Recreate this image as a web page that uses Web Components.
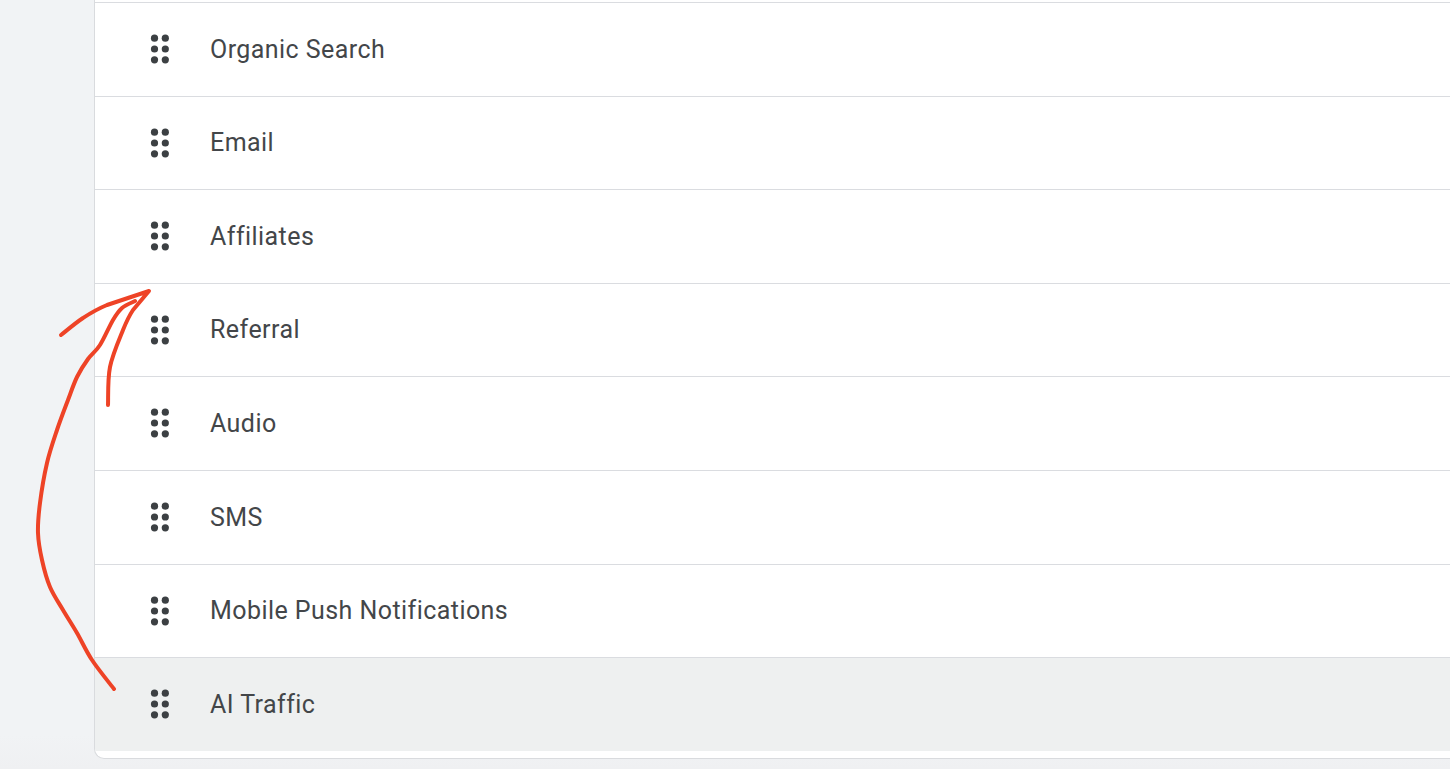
<!DOCTYPE html>
<html>
<head>
<meta charset="utf-8">
<title>Channel groups</title>
<style>
    html, body { margin: 0; height: 100%; overflow: hidden; }
    body {
        background: #f1f3f5;
        font-family: Roboto, "Liberation Sans", sans-serif;
        color: #434649;
    }
</style>
</head>
<body>
<channel-page>
    <channel-list>
        <channel-row>Organic Search</channel-row>
        <channel-row>Email</channel-row>
        <channel-row>Affiliates</channel-row>
        <channel-row>Referral</channel-row>
        <channel-row>Audio</channel-row>
        <channel-row>SMS</channel-row>
        <channel-row>Mobile Push Notifications</channel-row>
        <channel-row selected>AI Traffic</channel-row>
    </channel-list>
    <scribble-arrow></scribble-arrow>
</channel-page>

<script>
class ChannelPage extends HTMLElement {
    constructor() {
        super();
        const shadow = this.attachShadow({ mode: "open" });
        shadow.innerHTML = `
            <style>
                :host {
                    display: block;
                    position: relative;
                    height: 769px;
                    padding-left: 94px;
                    box-sizing: border-box;
                    background: linear-gradient(#f1f3f5 735px, #eff0f2 769px);
                }
            </style>
            <slot></slot>
        `;
    }
}

class ChannelList extends HTMLElement {
    constructor() {
        super();
        const shadow = this.attachShadow({ mode: "open" });
        shadow.innerHTML = `
            <style>
                :host {
                    display: block;
                    background: #fff;
                    box-sizing: border-box;
                    padding: 2px 0 7px;
                    border-left: 1px solid #d9dbde;
                    border-bottom: 1px solid #d9dbde;
                    border-bottom-left-radius: 10px;
                    overflow: hidden;
                }
            </style>
            <slot></slot>
        `;
    }
}

class ChannelRow extends HTMLElement {
    constructor() {
        super();
        const shadow = this.attachShadow({ mode: "open" });
        shadow.innerHTML = `
            <style>
                :host {
                    display: flex;
                    align-items: center;
                    box-sizing: border-box;
                    height: 93.6px;
                    padding: 0 0 0.5px 54px;
                    border-top: 1px solid #dadce0;
                    font-size: 25px;
                    letter-spacing: 0.44px;
                }
                :host([selected]) { background: #eef0f0; }
                svg { width: 22px; height: 32px; flex: none; margin-right: 39px; }
            </style>
            <svg viewBox="0 0 22 32" fill="#3c4043">
                <circle cx="5.5" cy="5.2" r="3.6"/><circle cx="16.3" cy="5.2" r="3.6"/>
                <circle cx="5.5" cy="16" r="3.6"/><circle cx="16.3" cy="16" r="3.6"/>
                <circle cx="5.5" cy="26.8" r="3.6"/><circle cx="16.3" cy="26.8" r="3.6"/>
            </svg>
            <slot></slot>
        `;
    }
}

// hand drawn annotation on top of the list
class ScribbleArrow extends HTMLElement {
    constructor() {
        super();
        const shadow = this.attachShadow({ mode: "open" });
        const strokes = [
            [[114,689],[92,660],[77,633],[63,610],[50,587],[42,560],[38,533],[40,503],[47,463],[57,430],[68,400],[77,377],[88,359],[100,345],[113,320],[122,308],[135,301]],
            [[108,405],[110,367],[123,330],[133,310],[149,291],[107,305],[83,318],[61,335]]
        ];
        const paths = strokes.map(s => `<path d="${this.smooth(s)}"/>`).join("");
        shadow.innerHTML = `
            <style>
                :host { position: absolute; left: 0; top: 0; width: 1450px; height: 769px; pointer-events: none; }
                svg { display: block; }
                path { fill: none; stroke: #ee4326; stroke-width: 4; stroke-linecap: round; stroke-linejoin: round; }
            </style>
            <svg width="1450" height="769" viewBox="0 0 1450 769">${paths}</svg>
        `;
    }

    smooth(pts) {
        let d = `M${pts[0][0]} ${pts[0][1]}`;
        for (let i = 0; i < pts.length - 1; i++) {
            const p0 = pts[i - 1] || pts[i], p1 = pts[i], p2 = pts[i + 1], p3 = pts[i + 2] || p2;
            // keep the sharp tip of the arrow head
            const tip = p2[0] === 149 || p1[0] === 149;
            const k = tip ? 0 : 1 / 6;
            d += ` C${p1[0] + (p2[0] - p0[0]) * k} ${p1[1] + (p2[1] - p0[1]) * k} ${p2[0] - (p3[0] - p1[0]) * k} ${p2[1] - (p3[1] - p1[1]) * k} ${p2[0]} ${p2[1]}`;
        }
        return d;
    }
}

customElements.define("channel-page", ChannelPage);
customElements.define("channel-list", ChannelList);
customElements.define("channel-row", ChannelRow);
customElements.define("scribble-arrow", ScribbleArrow);
</script>
</body>
</html>
